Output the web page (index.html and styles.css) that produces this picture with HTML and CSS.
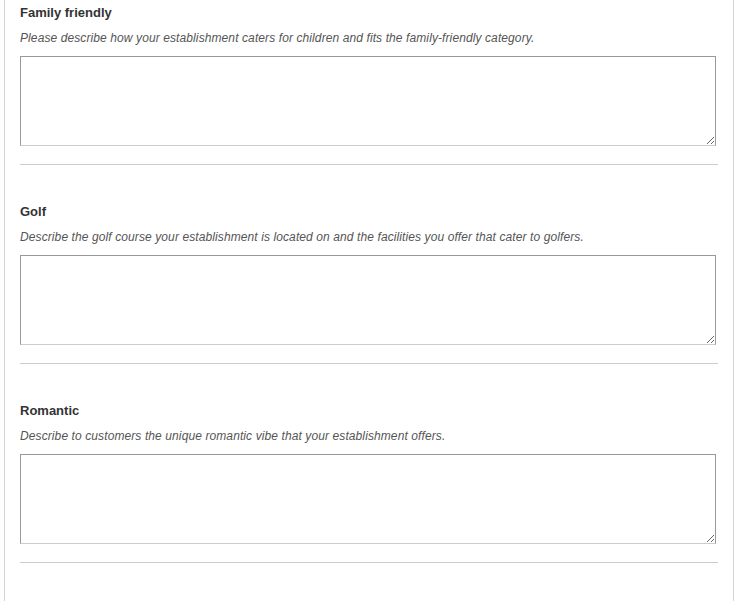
FILE: index.html
```html
<!DOCTYPE html>
<html lang="en">
<head>
<meta charset="utf-8">
<title>Categories</title>
<link rel="stylesheet" href="styles.css">
</head>
<body>
<div class="panel">
  <div class="field">
    <h3 class="field-title">Family friendly</h3>
    <p class="field-desc">Please describe how your establishment caters for children and fits the family-friendly category.</p>
    <textarea class="field-input"></textarea>
    <hr class="field-sep">
  </div>
  <div class="field">
    <h3 class="field-title">Golf</h3>
    <p class="field-desc">Describe the golf course your establishment is located on and the facilities you offer that cater to golfers.</p>
    <textarea class="field-input"></textarea>
    <hr class="field-sep">
  </div>
  <div class="field">
    <h3 class="field-title">Romantic</h3>
    <p class="field-desc">Describe to customers the unique romantic vibe that your establishment offers.</p>
    <textarea class="field-input"></textarea>
    <hr class="field-sep">
  </div>
</div>
</body>
</html>
```

FILE: styles.css
```css
html, body {
  margin: 0;
  padding: 0;
  background: #fff;
}

body {
  font-family: "Liberation Sans", Arial, sans-serif;
  color: #333;
}

.panel {
  margin-left: 4px;
  width: 730px;
  height: 601px;
  overflow: hidden;
  border-left: 1px solid #d4d4d4;
  border-right: 1px solid #d4d4d4;
  padding: 5px 15px 0 15px;
  box-sizing: border-box;
}

.field {
  padding-bottom: 39px;
}

.field-title {
  margin: 0;
  font-size: 13px;
  line-height: 16px;
  font-weight: bold;
  color: #333;
}

.field-desc {
  margin: 9px 0 0 0;
  font-size: 12px;
  line-height: 16px;
  font-style: italic;
  letter-spacing: 0.1px;
  color: #555;
}

.field-input {
  display: block;
  margin: 10px 0 0 0;
  width: 696px;
  height: 90px;
  box-sizing: border-box;
  border: 1px solid #999;
  border-bottom-color: #ccc;
  padding: 4px;
  font-family: inherit;
  font-size: 12px;
  resize: vertical;
  background: #fff;
}

.field-sep {
  margin: 18px 0 0 0;
  width: 698px;
  height: 0;
  border: 0;
  border-top: 1px solid #ccc;
}
```
